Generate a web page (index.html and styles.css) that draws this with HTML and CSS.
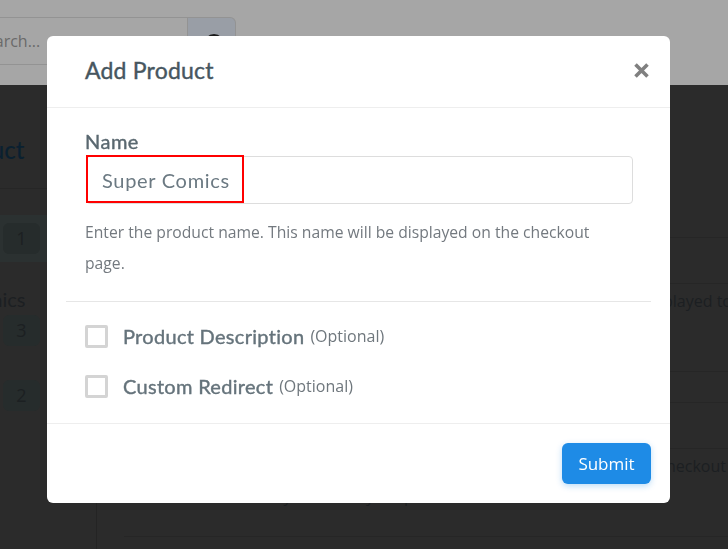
FILE: index.html
```html
<!DOCTYPE html>
<html lang="en">
<head>
    <meta charset="UTF-8">
    <meta name="viewport" content="width=device-width, initial-scale=1.0">
    <link rel="stylesheet" href="styles.css">
    <title>Add Product</title>
</head>
<body>
    <!-- Dimmed page behind the modal -->
    <div class="topbar">
        <div class="search">
            <div class="search-input">Search...</div>
            <div class="search-button"><span class="search-icon"></span></div>
        </div>
    </div>
    <div class="page">
        <aside class="sidebar">
            <h2 class="side-title">Product</h2>
            <div class="side-row side-row-active"><span class="badge">1</span></div>
            <div class="side-name">Super Comics</div>
            <div class="side-row"><span class="badge">3</span></div>
            <div class="side-row side-row-last"><span class="badge">2</span></div>
        </aside>
        <div class="content">
            <div class="line line-short"></div>
            <div class="line line-short"></div>
            <div class="line line-tall"><span class="line-text line-text-far">displayed to</span></div>
            <div class="line line-thin"></div>
            <div class="line line-short"></div>
            <div class="line line-tall">
                <span class="line-text">checkout</span>
                <span class="line-note">Only visible to your product</span>
            </div>
        </div>
    </div>

    <!-- Modal -->
    <div class="overlay">
        <div class="modal">
            <header class="modal-header">
                <h1>Add Product</h1>
                <svg class="close-icon" width="15" height="15" viewBox="0 0 15 15">
                    <path d="M1.5 1.5 L13.5 13.5 M13.5 1.5 L1.5 13.5"></path>
                </svg>
            </header>
            <div class="modal-body">
                <div class="field">
                    <label class="field-label">Name</label>
                    <div class="field-input">Super Comics</div>
                    <div class="highlight"></div>
                    <p class="help">Enter the product name. This name will be displayed on the checkout page.</p>
                </div>
                <div class="options">
                    <div class="option"><span class="checkbox"></span><b>Product Description</b> <small>(Optional)</small></div>
                    <div class="option"><span class="checkbox"></span><b>Custom Redirect</b> <small>(Optional)</small></div>
                </div>
            </div>
            <footer class="modal-footer">
                <button class="submit">Submit</button>
            </footer>
        </div>
    </div>
</body>
</html>
```

FILE: styles.css
```css
/* Reset */
body, h1, h2, p {
    margin: 0;
    padding: 0;
}

body {
    background-color: #2b2b2b;
    font-family: "Open Sans", Arial, sans-serif;
    height: 549px;
    overflow: hidden;
}

/* Top bar behind the modal */
.topbar {
    background-color: #a6a6a6;
    height: 85px;
    padding-top: 17px;
    box-sizing: border-box;
}

.search {
    display: flex;
    margin-left: -36px;
    width: 272px;
    height: 48px;
}

.search-input {
    flex: 1;
    border: 1px solid #939393;
    color: #6a6a6a;
    font-size: 16px;
    line-height: 46px;
    padding-left: 12px;
}

.search-button {
    width: 48px;
    background-color: #999ea6;
    border: 1px solid #939393;
    border-left: 0;
    border-radius: 0 6px 6px 0;
    padding: 16px 0 0 16px;
    box-sizing: border-box;
}

.search-icon {
    display: block;
    width: 14px;
    height: 14px;
    border: 3px solid #1c1c1c;
    border-radius: 50%;
}

/* Page behind the modal */
.page {
    display: flex;
}

.sidebar {
    width: 96px;
    height: 464px;
    border-right: 1px solid #242424;
    flex-shrink: 0;
    color: #1c1f22;
}

.side-title {
    color: #0a2030;
    font-family: Lato, sans-serif;
    font-size: 24px;
    font-weight: 500;
    margin-left: -59px;
    line-height: 130px;
    height: 103px;
    border-bottom: 1px solid #262626;
    white-space: nowrap;
}

.side-row {
    height: 47px;
    padding: 8px 3px;
    box-sizing: border-box;
}

.side-row-active {
    background-color: #2b3131;
    margin-top: 26px;
}

.side-row-last {
    margin-top: 14px;
}

.side-name {
    font-family: Lato, sans-serif;
    font-size: 20px;
    line-height: 24px;
    margin: 25px 0 0 -94px;
    white-space: nowrap;
}

.side-name + .side-row {
    padding-top: 4px;
}

.badge {
    display: block;
    width: 37px;
    height: 31px;
    background-color: #262c2c;
    border-radius: 6px;
    color: #1c2022;
    font-size: 18px;
    line-height: 31px;
    text-align: center;
}

.content {
    flex: 1;
    padding: 107px 0 0 27px;
    min-width: 0;
}

.line {
    border-bottom: 1px solid #262626;
    box-sizing: border-box;
    color: #1c1f22;
    display: flex;
    flex-direction: column;
    align-items: flex-end;
    font-size: 16px;
    line-height: 30px;
    white-space: nowrap;
}

.line-short { height: 46px; }
.line-thin { height: 31px; }
.line-tall { height: 88px; padding-top: 2px; }

.line-text {
    margin-right: 2px;
}

.line-text-far {
    margin-right: -4px;
}

.line-note {
    margin-right: 265px;
}

/* Modal */
.overlay {
    position: fixed;
    top: 0;
    left: 0;
    width: 100%;
    height: 100%;
    padding: 36px 0 0 47px;
    box-sizing: border-box;
}

.modal {
    width: 623px;
    height: 467px;
    background-color: #fff;
    border-radius: 6px;
    display: flex;
    flex-direction: column;
}

.modal-header {
    height: 72px;
    box-sizing: border-box;
    border-bottom: 1px solid #eeeeee;
    padding: 0 21px 3px 38px;
    display: flex;
    align-items: center;
    justify-content: space-between;
    flex-shrink: 0;
}

.modal-header h1 {
    color: #47565f;
    font-family: Lato, sans-serif;
    font-size: 23px;
    font-weight: 400;
    letter-spacing: 0.2px;
    -webkit-text-stroke: 0.4px #47565f;
}

.close-icon path {
    stroke: #808080;
    stroke-width: 3.6;
    fill: none;
}

.modal-body {
    flex: 1;
    padding: 0 19px;
}

.field {
    position: relative;
    padding: 21px 18px 23px 20px;
    border-bottom: 1px solid #e6e6e6;
    height: 194px;
    box-sizing: border-box;
}

.field-label {
    display: block;
    color: #5a6870;
    font-family: Lato, sans-serif;
    font-size: 20px;
    letter-spacing: 0.5px;
    -webkit-text-stroke: 0.4px #5a6870;
    line-height: 24px;
    margin: 0 0 3px -1px;
}

.field-input {
    height: 48px;
    box-sizing: border-box;
    border: 1px solid #dddddd;
    border-radius: 4px;
    color: #6b7982;
    font-family: Lato, sans-serif;
    font-size: 20px;
    letter-spacing: 0.7px;
    line-height: 46px;
    padding-left: 15px;
}

/* Red annotation box drawn over the input */
.highlight {
    position: absolute;
    top: 47px;
    left: 20px;
    width: 158px;
    height: 48px;
    box-sizing: border-box;
    border: 2px solid #f00;
}

.help {
    color: #73797f;
    font-size: 15.7px;
    line-height: 31px;
    margin: 13px 0 0 -1px;
}

.options {
    padding: 9px 0 0 19px;
}

.option {
    display: flex;
    align-items: center;
    height: 50px;
    color: #65737b;
    white-space: pre;
}

.option b {
    font-family: Lato, sans-serif;
    font-size: 20px;
    font-weight: 400;
    letter-spacing: 0.3px;
    -webkit-text-stroke: 0.4px #65737b;
}

.option small {
    color: #6f777d;
    font-size: 16px;
    margin-left: 6px;
}

.checkbox {
    width: 23px;
    height: 23px;
    box-sizing: border-box;
    border: 3px solid #d4d4d4;
    border-radius: 2px;
    margin-right: 15px;
}

.modal-footer {
    height: 80px;
    box-sizing: border-box;
    border-top: 1px solid #eeeeee;
    padding: 19px 19px 0 0;
    display: flex;
    justify-content: flex-end;
    flex-shrink: 0;
}

.submit {
    width: 89px;
    height: 41px;
    background-color: #1e8be6;
    border: 0;
    border-radius: 6px;
    box-shadow: 0 2px 6px rgba(30, 139, 230, 0.3);
    color: #fff;
    font-family: "Open Sans", sans-serif;
    font-size: 17px;
}
```
